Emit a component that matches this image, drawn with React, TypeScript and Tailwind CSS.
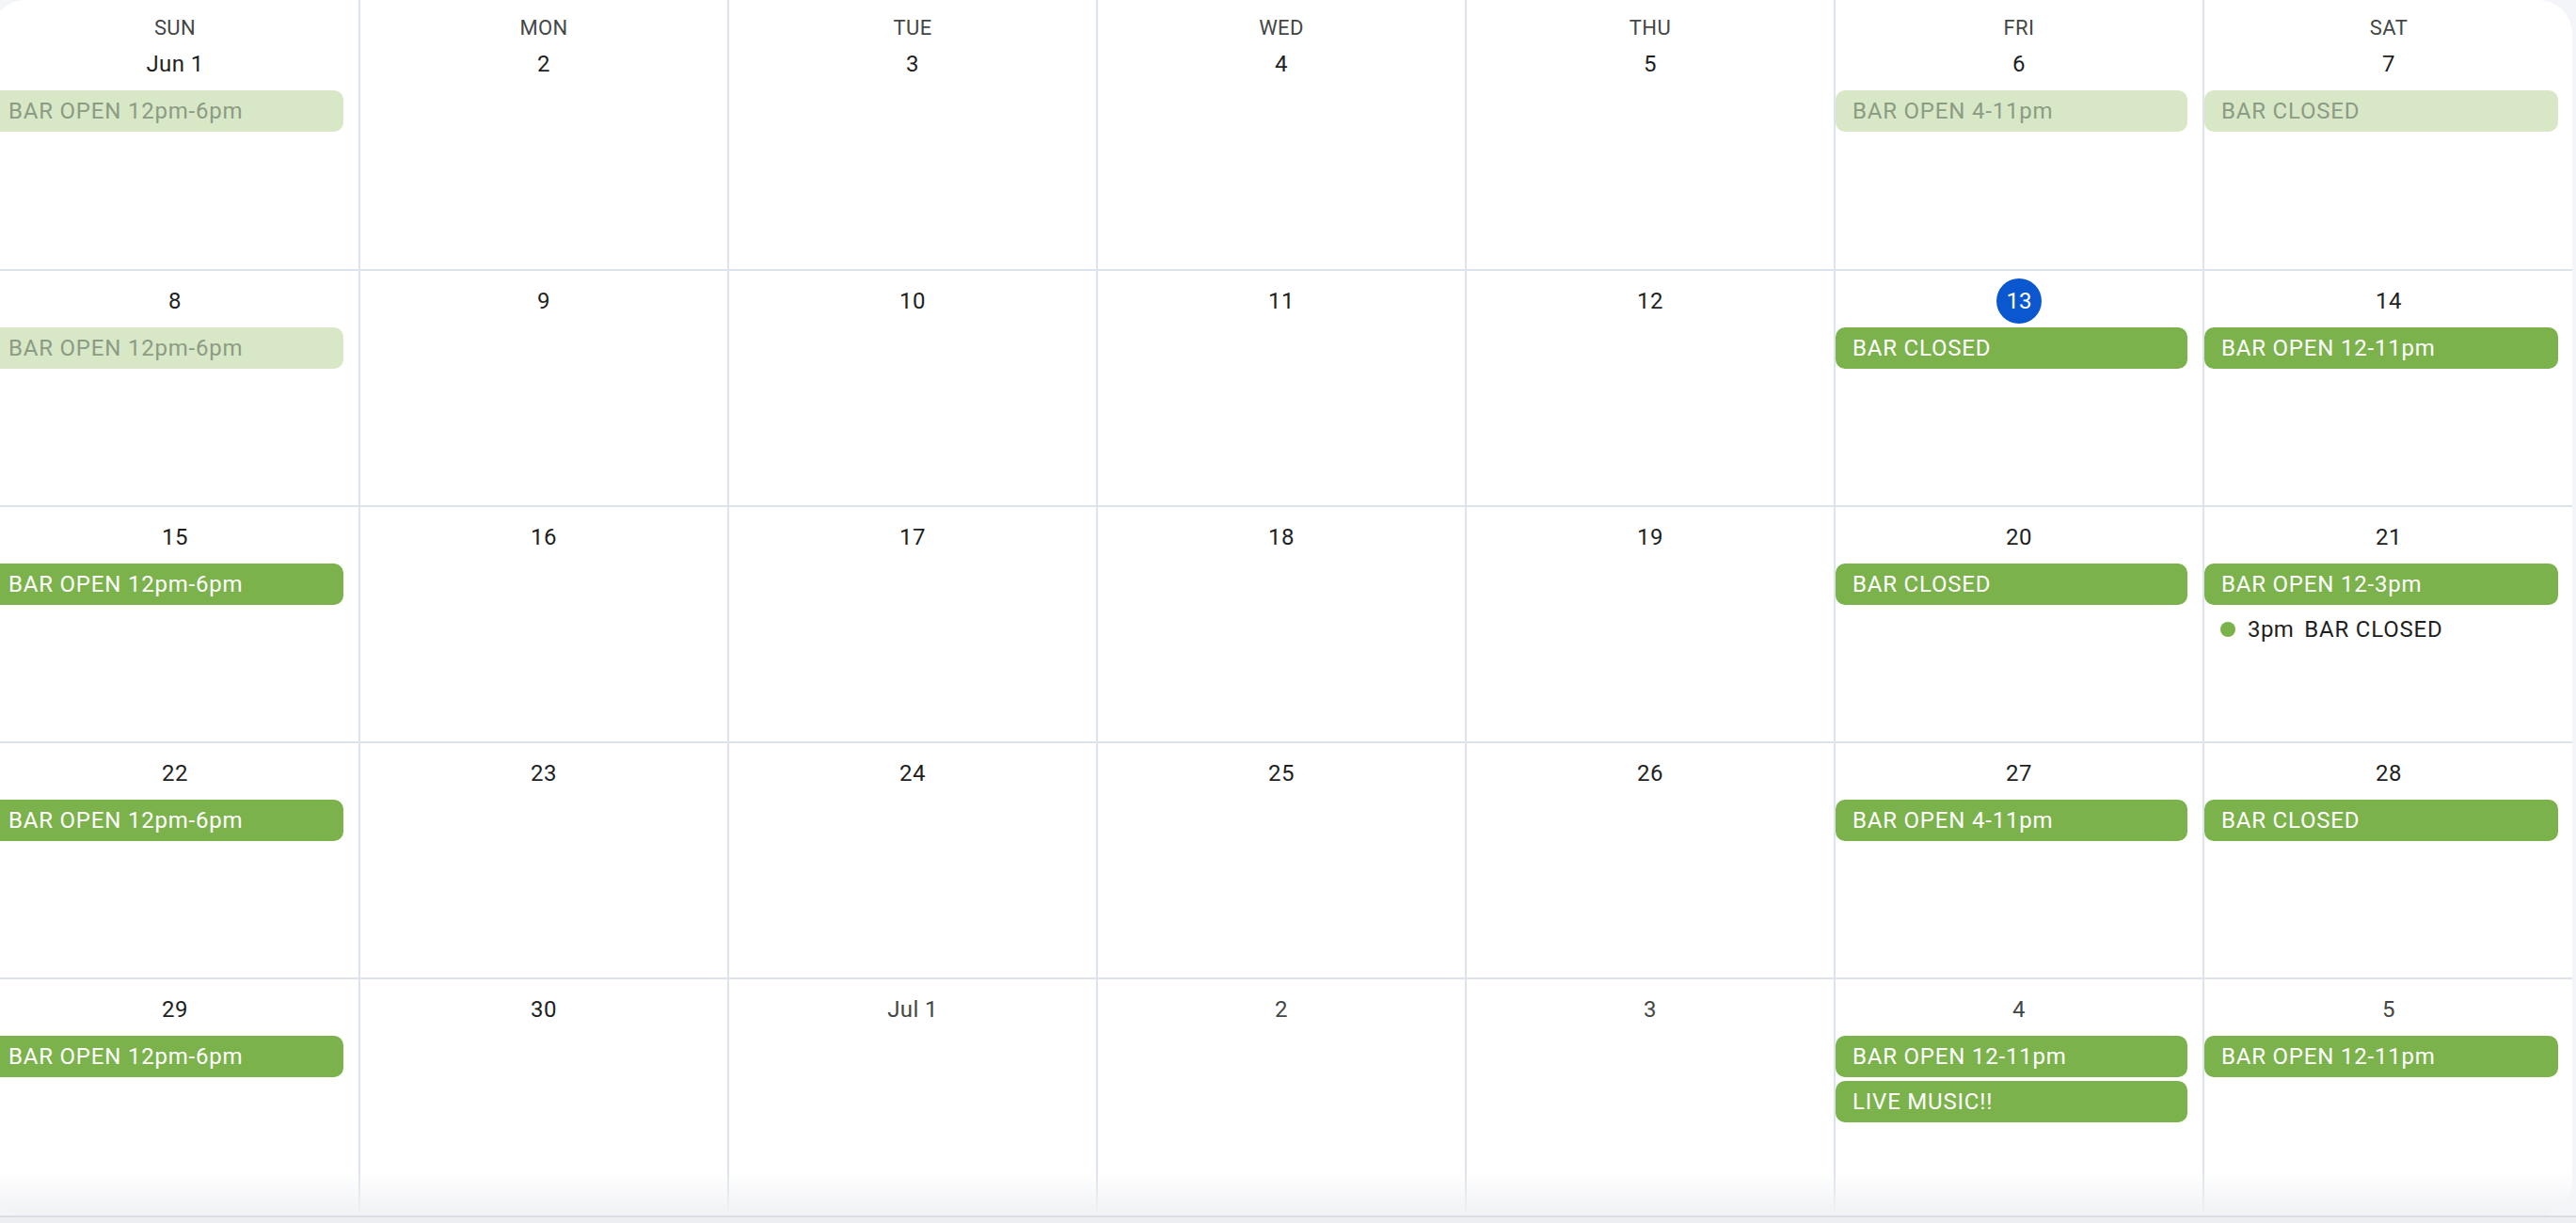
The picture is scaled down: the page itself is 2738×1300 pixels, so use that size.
type Chip = { label: string; past?: boolean };
type Day = { date: string; other?: boolean; today?: boolean; chips?: Chip[]; dot?: { time: string; label: string } };

const dayNames = ["SUN", "MON", "TUE", "WED", "THU", "FRI", "SAT"];

const weeks: Day[][] = [
    [
        { date: "Jun 1", chips: [{ label: "BAR OPEN 12pm-6pm", past: true }] },
        { date: "2" },
        { date: "3" },
        { date: "4" },
        { date: "5" },
        { date: "6", chips: [{ label: "BAR OPEN 4-11pm", past: true }] },
        { date: "7", chips: [{ label: "BAR CLOSED", past: true }] },
    ],
    [
        { date: "8", chips: [{ label: "BAR OPEN 12pm-6pm", past: true }] },
        { date: "9" },
        { date: "10" },
        { date: "11" },
        { date: "12" },
        { date: "13", today: true, chips: [{ label: "BAR CLOSED" }] },
        { date: "14", chips: [{ label: "BAR OPEN 12-11pm" }] },
    ],
    [
        { date: "15", chips: [{ label: "BAR OPEN 12pm-6pm" }] },
        { date: "16" },
        { date: "17" },
        { date: "18" },
        { date: "19" },
        { date: "20", chips: [{ label: "BAR CLOSED" }] },
        { date: "21", chips: [{ label: "BAR OPEN 12-3pm" }], dot: { time: "3pm", label: "BAR CLOSED" } },
    ],
    [
        { date: "22", chips: [{ label: "BAR OPEN 12pm-6pm" }] },
        { date: "23" },
        { date: "24" },
        { date: "25" },
        { date: "26" },
        { date: "27", chips: [{ label: "BAR OPEN 4-11pm" }] },
        { date: "28", chips: [{ label: "BAR CLOSED" }] },
    ],
    [
        { date: "29", chips: [{ label: "BAR OPEN 12pm-6pm" }] },
        { date: "30" },
        { date: "Jul 1", other: true },
        { date: "2", other: true },
        { date: "3", other: true },
        { date: "4", other: true, chips: [{ label: "BAR OPEN 12-11pm" }, { label: "LIVE MUSIC!!" }] },
        { date: "5", other: true, chips: [{ label: "BAR OPEN 12-11pm" }] },
    ],
];

const DayCell = ({ day, header, last }: { day: Day; header?: string; last: boolean }) => {
    return (
        <div className={`flex flex-col border-b-2 border-[#dde3ea] ${last ? "" : "border-r-2"} ${header ? "pt-[19px]" : "pt-[8px]"}`}>
            {
                header &&
                <div className="h-[22px] flex items-center justify-center text-[22px] leading-[22px] text-[#444746] tracking-[0.4px] mb-[3px]">
                    {header}
                </div>
            }
            <div className="h-[48px] flex items-center justify-center">
                {
                    day.today
                        ?
                        <span className="w-[48px] h-[48px] rounded-full bg-[#0b57d0] text-white flex items-center justify-center text-[24px]">
                            {day.date}
                        </span>
                        :
                        <span className={`text-[24px] tracking-[0.4px] ${day.other ? "text-[#444746]" : "text-[#1f1f1f]"}`}>
                            {day.date}
                        </span>
                }
            </div>
            <div className="mt-[4px] flex flex-col gap-[4px] pr-[16px]">
                {
                    day.chips?.map((chip, index) => (
                        <div key={index} className={`h-[44px] rounded-[10px] pl-[18px] flex items-center text-[24px] tracking-[0.8px] whitespace-nowrap ${chip.past ? "bg-[#d8e8c7] text-[#8c9b84]" : "bg-[#7cb24c] text-white"}`}>
                            {chip.label}
                        </div>
                    ))
                }
                {
                    day.dot &&
                    <div className="h-[44px] pl-[17px] flex items-center text-[24px] text-[#1f1f1f] whitespace-nowrap">
                        <span className="w-[16px] h-[16px] rounded-full bg-[#7cb24c] mr-[13px]" />
                        <span className="tracking-[0.4px]">{day.dot.time}</span>
                        <span className="ml-[11px] tracking-[0.8px]">{day.dot.label}</span>
                    </div>
                }
            </div>
        </div>
    );
};

export default function App() {
    return (
        <div className="w-[2738px] h-[1300px] bg-[#f3f5f9] overflow-hidden flex flex-col font-['Roboto','Liberation_Sans',sans-serif]">
            <div className="relative ml-[-9px] w-[2743px] h-[1292px] shrink-0 bg-white rounded-[36px] overflow-hidden">
                <div className="grid grid-cols-[repeat(7,392px)] grid-rows-[288px_251px_251px_251px_251px]">
                    {
                        weeks.map((week, w) =>
                            week.map((day, d) => (
                                <DayCell key={`${w}-${d}`} day={day} header={w === 0 ? dayNames[d] : undefined} last={d === 6} />
                            ))
                        )
                    }
                </div>
                <div className="absolute left-0 right-0 bottom-0 h-[48px] bg-linear-to-b from-[#ffffff00] to-[#f1f2f5] pointer-events-none" />
            </div>
            <div className="flex-1 bg-[#eceef2] border-t-2 border-[#d9dee6]" />
        </div>
    );
}
